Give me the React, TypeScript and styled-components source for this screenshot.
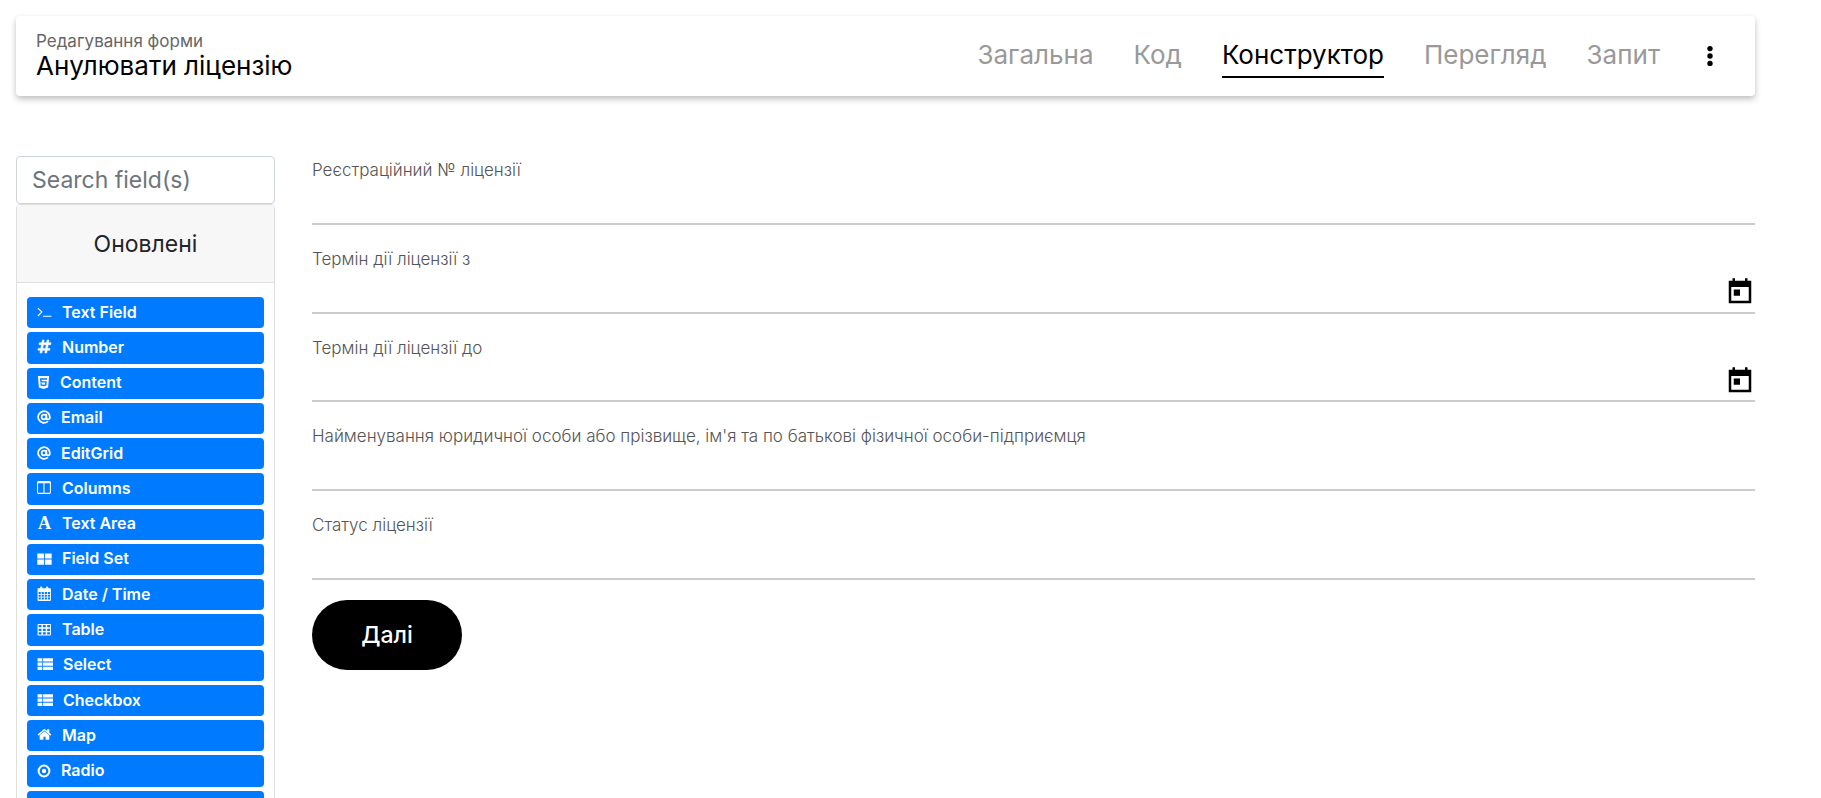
import React from "react";
import styled, { createGlobalStyle } from "styled-components";
import { FaHtml5, FaHashtag } from "react-icons/fa";
import { AtSign } from "lucide-react";

const Global = createGlobalStyle`
  *, *::before, *::after { box-sizing: border-box; }
  body { margin: 0; background: #fff; color: #000; font-family: Inter, "Liberation Sans", sans-serif; }
  button, input { font-family: inherit; }
`;

const Page = styled.div`
  height: 100vh;
  overflow: hidden;
  padding: 16px 66px 0 16px;
`;

const Header = styled.header`
  display: flex;
  align-items: center;
  justify-content: space-between;
  height: 80px;
  padding: 0 35px 0 20px;
  border-radius: 4px;
  background: #fff;
  box-shadow: 0 3px 6px rgba(0, 0, 0, 0.26);
`;

const Subtitle = styled.p`
  margin: 0;
  font-size: 17px;
  line-height: 20px;
  color: #666;
`;

const Title = styled.h1`
  margin: 0;
  font-size: 26px;
  line-height: 30px;
  font-weight: 400;
`;

const Nav = styled.nav`
  display: flex;
  align-items: center;
  gap: 40px;
`;

const Tab = styled.a<{ $active?: boolean }>`
  height: 44px;
  padding-top: 5px;
  font-size: 26px;
  line-height: 32px;
  text-decoration: none;
  color: ${(p) => (p.$active ? "#000" : "#999")};
  border-bottom: 2px solid ${(p) => (p.$active ? "#000" : "transparent")};
`;

const IconButton = styled.button`
  display: flex;
  padding: 0;
  border: 0;
  background: none;
`;

const Body = styled.div`
  display: flex;
  align-items: flex-start;
  gap: 37px;
  margin-top: 60px;
`;

const Sidebar = styled.aside`
  flex: 0 0 259px;
`;

const Search = styled.input`
  display: block;
  width: 100%;
  height: 48px;
  padding: 0 15px;
  border: 1px solid #ced4da;
  border-radius: 4px;
  font-size: 23px;
  color: #495057;
  &::placeholder { color: #6c757d; opacity: 1; }
`;

const Card = styled.section`
  border: 1px solid #dfdfdf;
  border-radius: 4px;
`;

const CardTitle = styled.h2`
  margin: 0;
  padding: 24px 0 23px;
  text-align: center;
  font-size: 23px;
  line-height: 30px;
  font-weight: 400;
  color: #212529;
  background: #f7f7f7;
  border-bottom: 1px solid #dfdfdf;
`;

const List = styled.div`
  display: grid;
  grid-auto-rows: 1fr;
  gap: 4px;
  height: 525px;
  margin: 14px 10px;
`;

const Item = styled.button`
  display: flex;
  align-items: center;
  gap: 10px;
  padding: 0 10px 2px;
  border: 0;
  border-radius: 4px;
  background: #007bff;
  color: #fff;
  font-size: 16px;
  line-height: 20px;
  font-weight: 600;
`;

const Letter = styled.span`
  width: 15px;
  text-align: center;
  font-family: "Liberation Serif", serif;
  font-size: 18px;
  font-weight: 700;
`;

const Shield = styled(FaHtml5)`
  width: 13px;
  height: 15px;
`;

const Form = styled.form`
  flex: 1;
  min-width: 0;
`;

const Fields = styled.div`
  display: grid;
  grid-auto-rows: 1fr;
  gap: 20px;
  height: 424px;
`;

const Field = styled.div`
  display: flex;
  flex-direction: column;
  border-bottom: 2px solid #ccc;
`;

const Label = styled.label`
  padding-top: 4px;
  font-size: 17px;
  line-height: 20px;
  font-weight: 300;
  color: #555;
`;

const Control = styled.div`
  flex: 1;
  display: flex;
  align-items: center;
  padding-top: 4px;
`;

const Input = styled.input`
  flex: 1;
  min-width: 0;
  height: 32px;
  padding: 0;
  border: 0;
  outline: 0;
  background: none;
  font-size: 17px;
`;

const Submit = styled.button`
  width: 150px;
  height: 70px;
  margin-top: 20px;
  border: 0;
  border-radius: 35px;
  background: #000;
  color: #fff;
  font-size: 23px;
  font-weight: 500;
`;

const Glyph = ({ d, size = 15 }: { d: string; size?: number }) => (
  <svg width={size} height={size} viewBox="0 0 1792 1792" fill="currentColor">
    <path fillRule="evenodd" d={d} />
  </svg>
);

const cell = (x: number, y: number, w: number, h: number) => `M${x} ${y}h${w}v${h}h${-w}z`;
const grid = (xs: number[], ys: number[], w: number, h: number) =>
  ys.map((y) => xs.map((x) => cell(x, y, w, h)).join("")).join("");

const terminal = "M649 983l-466 466q-10 10-23 10t-23-10l-50-50q-10-10-10-23t10-23l393-393-393-393q-10-10-10-23t10-23l50-50q10-10 23-10t23 10l466 466q10 10 10 23t-10 23zm1079 457v64q0 14-9 23t-23 9h-960q-14 0-23-9t-9-23v-64q0-14 9-23t23-9h960q14 0 23 9t9 23z";
const columns = "M160 1536h608v-1152h-640v1120q0 13 9.500 22.500t22.500 9.500zm1376-32v-1120h-640v1152h608q13 0 22.500-9.500t9.500-22.500zm128-1216v1216q0 66-47 113t-113 47h-1344q-66 0-113-47t-47-113v-1216q0-66 47-113t113-47h1344q66 0 113 47t47 113z";
const home = "M1472 992v480q0 26-19 45t-45 19h-384v-384h-256v384h-384q-26 0-45-19t-19-45v-480q0-1 .5-3t.5-3l575-474 575 474q1 2 1 6zm223-69l-62 74q-8 9-21 11h-3q-13 0-21-7l-692-577-692 577q-12 8-24 7-13-2-21-11l-62-74q-8-10-7-23.500t11-21.500l719-599q32-26 76-26t76 26l244 204v-195q0-14 9-23t23-9h192q14 0 23 9t9 23v408l219 182q10 8 11 21.500t-7 23.500z";
const large = grid([30, 940], [290, 1010], 810, 620);
const table =
  "M160 240h1408q96 0 96 96v1184q0 96-96 96h-1408q-96 0-96-96v-1184q0-96 96-96z" +
  grid([192, 704, 1216], [370, 810, 1230], 340, 270);
const calendar =
  "M128 256h256v-96q0-96 96-96h64q96 0 96 96v96h448v-96q0-96 96-96h64q96 0 96 96v96h256q64 0 64 64v1344q0 128-128 128h-1344q-128 0-128-128v-1344q0-64 64-64z" +
  grid([192, 560, 928, 1296], [704, 1040, 1376], 256, 240);
const thList = grid([60], [256, 736, 1216], 500, 360) + grid([640], [256, 736, 1216], 1150, 360);

const At = () => <AtSign size={14} strokeWidth={3} />;

const Radio = () => (
  <svg width="14" height="15" viewBox="0 0 14 15">
    <circle cx="7" cy="8" r="5.400" fill="none" stroke="currentColor" strokeWidth="2" />
    <circle cx="7" cy="8" r="2.200" fill="currentColor" />
  </svg>
);

const items: { name: string; icon: React.ReactNode }[] = [
  { name: "Text Field", icon: <Glyph d={terminal} /> },
  { name: "Number", icon: <FaHashtag size={15} stroke="currentColor" strokeWidth={20} /> },
  { name: "Content", icon: <Shield /> },
  { name: "Email", icon: <At /> },
  { name: "EditGrid", icon: <At /> },
  { name: "Columns", icon: <Glyph d={columns} /> },
  { name: "Text Area", icon: <Letter aria-hidden="true">A</Letter> },
  { name: "Field Set", icon: <Glyph d={large} /> },
  { name: "Date / Time", icon: <Glyph d={calendar} /> },
  { name: "Table", icon: <Glyph d={table} /> },
  { name: "Select", icon: <Glyph d={thList} size={16} /> },
  { name: "Checkbox", icon: <Glyph d={thList} size={16} /> },
  { name: "Map", icon: <Glyph d={home} /> },
  { name: "Radio", icon: <Radio /> },
];

const fields = [
  { id: "number", label: "Реєстраційний № ліцензії" },
  { id: "from", label: "Термін дії ліцензії з", date: true },
  { id: "to", label: "Термін дії ліцензії до", date: true },
  { id: "name", label: "Найменування юридичної особи або прізвище, ім'я та по батькові фізичної особи-підприємця" },
  { id: "status", label: "Статус ліцензії" },
];

const tabs = ["Загальна", "Код", "Конструктор", "Перегляд", "Запит"];

export default function App() {
  return (
    <Page>
      <Global />
      <Header>
        <div>
          <Subtitle>Редагування форми</Subtitle>
          <Title>Анулювати ліцензію</Title>
        </div>
        <Nav>
          {tabs.map((t) => (
            <Tab key={t} href="#" $active={t === "Конструктор"}>{t}</Tab>
          ))}
          <IconButton type="button" aria-label="Меню">
            <svg width="20" height="34" viewBox="0 0 20 34">
              <circle cx="10" cy="9.600" r="2.700" />
              <circle cx="10" cy="17" r="2.700" />
              <circle cx="10" cy="24.400" r="2.700" />
            </svg>
          </IconButton>
        </Nav>
      </Header>
      <Body>
        <Sidebar>
          <Search placeholder="Search field(s)" aria-label="Search field(s)" />
          <Card>
            <CardTitle>Оновлені</CardTitle>
            <List>
              {items.map((i) => (
                <Item key={i.name} type="button">{i.icon}{i.name}</Item>
              ))}
              <Item type="button" aria-label="Button" />
            </List>
          </Card>
        </Sidebar>
        <Form>
          <Fields>
            {fields.map((f) => (
              <Field key={f.id}>
                <Label htmlFor={f.id}>{f.label}</Label>
                <Control>
                  <Input id={f.id} type="text" />
                  {f.date && (
                    <IconButton type="button" aria-label="Календар">
                      <svg width="30" height="30" viewBox="0 0 24 24">
                        <path fillRule="evenodd" d="M3 3h3V1h2v2h8V1h2v2h3v18H3zM5 8v11h14V8zM7 10h5v5H7z" />
                      </svg>
                    </IconButton>
                  )}
                </Control>
              </Field>
            ))}
          </Fields>
          <Submit type="submit">Далі</Submit>
        </Form>
      </Body>
    </Page>
  );
}
